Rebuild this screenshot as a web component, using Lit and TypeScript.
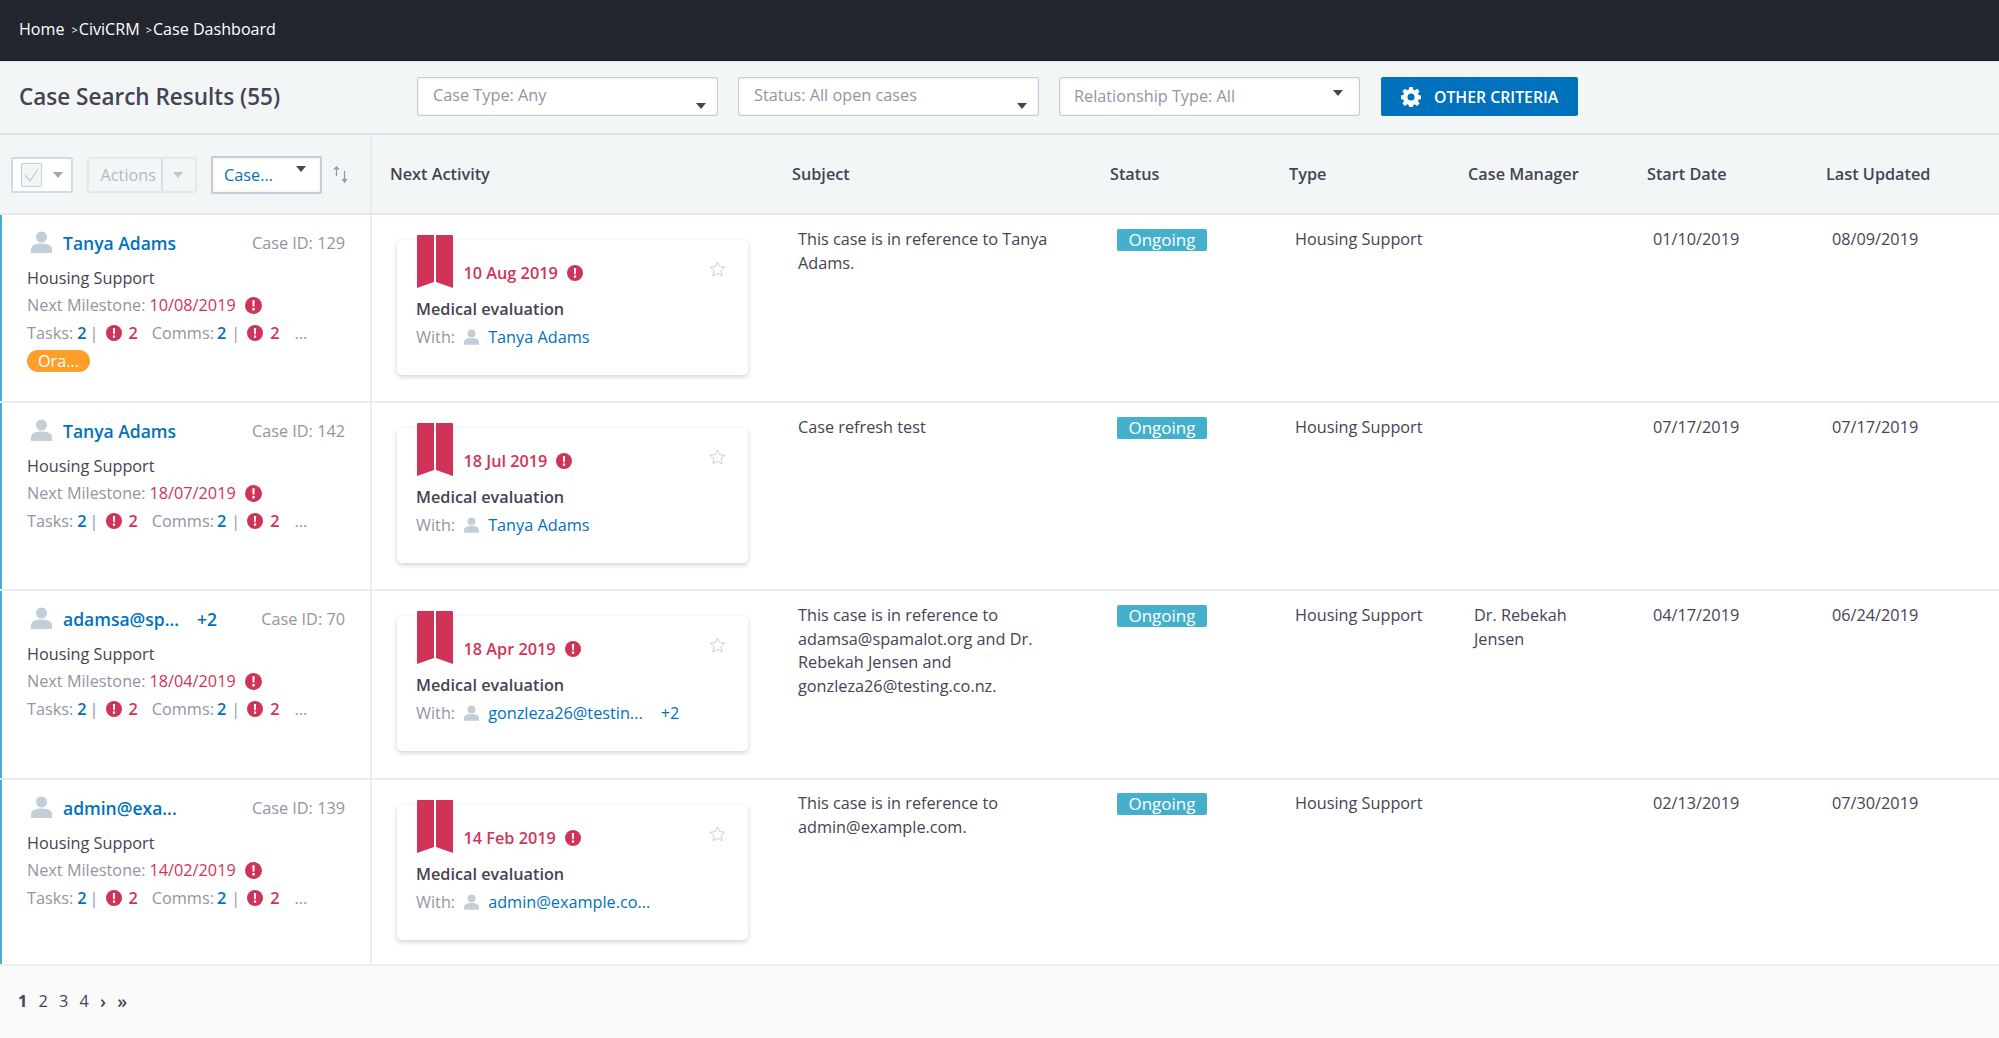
import { LitElement, html, css } from "lit";
import { customElement } from "lit/decorators.js";

const person = (cls: string) => html`<svg class=${cls} viewBox="0 0 21 22"><circle cx="10.5" cy="6" r="5.5"/><path d="M0 22v-3.5C0 14.500 4 12.500 10.500 12.500S21 14.500 21 18.500V22z"/></svg>`;
const alert = (cls = "alert") => html`<svg class=${cls} viewBox="0 0 16 16"><circle cx="8" cy="8" r="8" fill="#cf3458"/><path d="M6.900 3h2.200l-.3 6.200H7.200zM6.900 10.400h2.200v2.300H6.900z" fill="#fff"/></svg>`;
const caret = (cls = "caret") => html`<span class=${cls}></span>`;

interface Row {
  name: string; extra?: string; id: string; milestone: string; tag?: string;
  date: string; withName: string; withExtra?: string;
  subject: string[]; manager?: string[]; start: string; updated: string;
}
const rows: Row[] = [
  { name: "Tanya Adams", id: "129", milestone: "10/08/2019", tag: "Ora...", date: "10 Aug 2019", withName: "Tanya Adams",
    subject: ["This case is in reference to Tanya", "Adams."], start: "01/10/2019", updated: "08/09/2019" },
  { name: "Tanya Adams", id: "142", milestone: "18/07/2019", date: "18 Jul 2019", withName: "Tanya Adams",
    subject: ["Case refresh test"], start: "07/17/2019", updated: "07/17/2019" },
  { name: "adamsa@sp...", extra: "+2", id: "70", milestone: "18/04/2019", date: "18 Apr 2019", withName: "gonzleza26@testin...", withExtra: "+2",
    subject: ["This case is in reference to", "adamsa@spamalot.org and Dr.", "Rebekah Jensen and", "gonzleza26@testing.co.nz."], manager: ["Dr. Rebekah", "Jensen"], start: "04/17/2019", updated: "06/24/2019" },
  { name: "admin@exa...", id: "139", milestone: "14/02/2019", date: "14 Feb 2019", withName: "admin@example.co...",
    subject: ["This case is in reference to", "admin@example.com."], start: "02/13/2019", updated: "07/30/2019" },
];

@customElement("app-root")
export class AppRoot extends LitElement {
  static styles = css`
    :host { display: flex; flex-direction: column; width: 1999px; height: 1038px; overflow: hidden; background: #fff;
      font-family: "Open Sans", sans-serif; font-size: 16.25px; color: #464354; }
    a { color: #0071bd; text-decoration: none; }
    svg { display: block; flex: none; }

    .crumbs { flex: none; height: 61px; box-sizing: border-box; background: #22272f; color: #fff; display: flex; align-items: center;
      padding: 0 0 3px 19px; font-size: 16.1px; }
    .crumbs .sep { font-size: 11px; margin: 0 1px 0 6px; }
    .crumbs .first { margin-right: 1px; }

    .filters { flex: none; height: 74px; box-sizing: border-box; background: #f3f6f7; border-top: 1px solid #dfe6e9; border-bottom: 2px solid #dfe6e9;
      display: flex; align-items: center; padding: 0 0 2px 19px; }
    .filters h1 { margin: 0; width: 398px; font-size: 22.5px; font-weight: 600; line-height: 30px; white-space: nowrap; padding-top: 1px; }
    .select { position: relative; box-sizing: border-box; width: 301px; height: 39px; margin-right: 20px; background: #fff; border: 1px solid #c2cfd8; border-radius: 2px;
      box-shadow: inset 0 0 3px rgba(0,0,0,.12); color: #9494a4; padding: 0 15px; display: flex; align-items: center; }
    .select span.t { margin-bottom: 3px; }
    .select .caret { position: absolute; right: 11px; bottom: 6px; }
    .select.up { padding-left: 14px; }
    .select.up .caret { top: 12px; right: 16px; bottom: auto; }
    .select.up span.t { margin-bottom: 2px; }
    .caret { display: block; width: 0; height: 0; border-left: 5px solid transparent; border-right: 5px solid transparent; border-top: 6px solid #464354; }
    .btn { box-sizing: border-box; width: 197px; height: 39px; margin-left: 1px; background: #0071bd; color: #fff; border-radius: 2px; display: flex; align-items: center;
      padding-left: 20px; gap: 13px; font-weight: 600; }
    .btn svg { width: 20px; height: 20px; }
    .btn span { font-size: 15.8px; white-space: nowrap; }

    .head { flex: none; height: 80px; box-sizing: border-box; background: #f3f6f7; border-bottom: 2px solid #e3e9ec; display: grid;
      grid-template-columns: 372px 402px 318px 179px 179px 179px 179px 1fr; align-items: center; font-weight: 600; }
    .head > div { padding-left: 18px; }
    .head > .tools { padding: 2px 0 0 11px; height: 100%; box-sizing: border-box; border-right: 2px solid #e8eef0; display: flex; align-items: center; font-weight: 400; }
    .chk { box-sizing: border-box; width: 62px; height: 36px; border: 2px solid #cfdce3; border-radius: 2px; background: #fff; display: flex; align-items: center; padding-left: 8px; gap: 11px; }
    .chk .box { width: 21px; height: 24px; box-sizing: border-box; border: 1px solid #c2cfd8; border-radius: 2px; background: #f3f6f7; }
    .chk .box svg { width: 19px; height: 22px; }
    .caret.dim { border-top-color: #9ea6b0; }
    .actions { box-sizing: border-box; width: 110px; height: 36px; margin-left: 14px; border: 2px solid #e3e9ec; border-radius: 2px; display: flex; align-items: center; color: #b4b9c2; }
    .actions .l { width: 74px; text-align: right; padding-right: 5px; box-sizing: border-box; border-right: 2px solid #d5dfe5; height: 100%; line-height: 32px; }
    .actions .caret { margin-left: 10px; border-top-color: #c2c6cd; }
    .casesel { position: relative; box-sizing: border-box; width: 111px; height: 38px; margin-left: 14px; border: 2px solid #c2cfd8; border-radius: 2px; background: #fff;
      color: #0071bd; padding-left: 11px; line-height: 35px; box-shadow: inset 0 0 3px rgba(0,0,0,.1); }
    .casesel .caret { position: absolute; right: 14px; top: 8px; }
    .sort { width: 16px; height: 18px; margin-left: 11px; }

    .row { flex: none; height: 188px; box-sizing: border-box; border-bottom: 2px solid #e8eef0; display: grid;
      grid-template-columns: 372px 402px 318px 179px 179px 179px 179px 1fr; }
    .row.r2 { height: 189px; }
    .row.r3 { height: 186px; }
    .left { box-sizing: border-box; border-left: 2px solid #44b0cc; border-right: 2px solid #e8eef0; padding: 14px 25px 0 25px; }
    .left > div { height: 28px; display: flex; align-items: center; white-space: nowrap; }
    .left > .nameline { position: relative; margin-bottom: 7px; }
    .left > .svc { height: 27px; }
    .who { width: 21px; height: 22px; margin: -2px 11px 0 4px; fill: #c2cfd8; }
    .nameline a { font-weight: 600; font-size: 17.5px; }
    .nameline .plus { margin-left: 18px; }
    .nameline .cid { margin-left: auto; color: #9494a4; }
    .muted { color: #9494a4; }
    .red { color: #cf3458; }
    .blue { color: #0071bd; font-weight: 600; }
    .alert { width: 16px; height: 16px; }
    .ms .alert { margin-left: 9px; width: 17px; height: 17px; }
    .ms .red { margin-left: 4px; }
    .counts .blue { margin-left: 4px; }
    .counts .gap + .blue { margin-left: 3px; }
    .counts .bar { margin: 0 7px 0 3px; color: #9494a4; }
    .counts .gap + .blue + .bar { margin-left: 5px; }
    .counts .n { margin-left: 7px; font-weight: 600; }
    .counts .gap { margin-left: 14px; }
    .counts .dots { margin-left: 15px; }
    .left > .tagline { height: 22px; margin-top: 3px; }
    .tag { background: #ff9f2b; color: #fff; border-radius: 11px; height: 22px; width: 63px; display: flex; align-items: center; justify-content: center; }

    .activity { padding: 25px 0 0 25px; }
    .card { position: relative; box-sizing: border-box; width: 351px; height: 135px; background: #fff; border-radius: 5px;
      box-shadow: 0 2px 5px rgba(40,50,60,.22); padding: 0 0 0 19px; }
    .mark { position: absolute; left: 20px; top: -5px; width: 36px; height: 53px; }
    .date { display: flex; align-items: center; height: 28px; padding: 19px 0 0 47.500px; box-sizing: content-box; font-weight: 600; color: #cf3458; }
    .date .alert { margin-left: 9px; }
    .star { position: absolute; right: 21px; top: 20px; width: 19px; height: 18px; fill: none; stroke: #c2cfd8; stroke-width: 1.300; }
    .title { font-weight: 600; height: 28px; line-height: 28px; margin-top: 8px; }
    .with { display: flex; align-items: center; height: 28px; white-space: nowrap; }
    .withp { width: 15px; height: 16px; fill: #c2cfd8; margin: 0 9px 0 9px; }
    .with .plus { margin-left: 18px; }

    .cell { padding: 13px 8px 0 24px; line-height: 23.600px; }
    .r3 .cell { padding-top: 12px; }
    .cell div { white-space: nowrap; }
    .badge { display: inline-block; width: 90px; height: 22px; box-sizing: border-box; background: #44b0cc; color: #fff; border-radius: 2px; text-align: center; line-height: 22px; font-size: 17px; vertical-align: top; margin: 1px 0 0 1px; }

    .pager { flex: 1; background: #fafafa; display: flex; align-items: center; padding: 0 0 2px 18px; gap: 11.200px; }
    .pager b { font-weight: 700; }
    .pager .arr { font-weight: 600; font-size: 18px; }
  `;

  private row(r: Row, i: number) {
    return html`<div class="row ${i === 2 ? "r2" : i === 3 ? "r3" : ""}">
      <div class="left">
        <div class="nameline">${person("who")}<a>${r.name}</a>${r.extra ? html`<a class="plus">${r.extra}</a>` : ""}<span class="cid">Case ID: ${r.id}</span></div>
        <div class="svc">Housing Support</div>
        <div class="ms"><span class="muted">Next Milestone:</span><span class="red">${r.milestone}</span>${alert()}</div>
        <div class="counts"><span class="muted">Tasks:</span><span class="blue">2</span><span class="bar">|</span>${alert()}<span class="red n">2</span><span class="muted gap">Comms:</span><span class="blue">2</span><span class="bar">|</span>${alert()}<span class="red n">2</span><span class="muted dots">...</span></div>
        ${r.tag ? html`<div class="tagline"><span class="tag">${r.tag}</span></div>` : ""}
      </div>
      <div class="activity"><div class="card">
        <svg class="mark" viewBox="0 0 36 53"><path d="M1 0h16v47L0 53V1a1 1 0 0 1 1-1zM19 0h16a1 1 0 0 1 1 1v52l-17-6z" fill="#cf3458"/></svg>
        <div class="date">${r.date}${alert()}</div>
        <svg class="star" viewBox="0 0 24 24"><path d="M12 2.500l2.900 6.300 6.900.8-5.100 4.700 1.400 6.800-6.100-3.400-6.100 3.400 1.400-6.800-5.100-4.700 6.900-.8z"/></svg>
        <div class="title">Medical evaluation</div>
        <div class="with"><span class="muted">With:</span>${person("withp")}<a>${r.withName}</a>${r.withExtra ? html`<a class="plus">${r.withExtra}</a>` : ""}</div>
      </div></div>
      <div class="cell">${r.subject.map((s) => html`<div>${s}</div>`)}</div>
      <div class="cell"><span class="badge">Ongoing</span></div>
      <div class="cell">Housing Support</div>
      <div class="cell">${(r.manager ?? []).map((s) => html`<div>${s}</div>`)}</div>
      <div class="cell">${r.start}</div>
      <div class="cell">${r.updated}</div>
    </div>`;
  }

  render() {
    return html`
      <div class="crumbs"><span class="first">Home</span><span class="sep">&gt;</span><span>CiviCRM</span><span class="sep">&gt;</span><span>Case Dashboard</span></div>
      <div class="filters">
        <h1>Case Search Results (55)</h1>
        <div class="select"><span class="t">Case Type: Any</span>${caret()}</div>
        <div class="select"><span class="t">Status: All open cases</span>${caret()}</div>
        <div class="select up"><span class="t">Relationship Type: All</span>${caret()}</div>
        <div class="btn">
          <svg viewBox="0 0 20 20"><path fill="#fff" fill-rule="evenodd" d="M8.200 0h3.600l.5 2.700 1.500.6 2.300-1.600 2.500 2.500-1.600 2.300.6 1.500 2.700.5v3.600l-2.700.5-.6 1.500 1.600 2.300-2.500 2.500-2.300-1.600-1.500.6-.5 2.700H8.200l-.5-2.700-1.500-.6-2.300 1.600-2.500-2.500 1.600-2.300-.6-1.500-2.700-.5V8.500l2.700-.5.6-1.500-1.600-2.300 2.500-2.500 2.300 1.600 1.500-.6zM10 6.500a3.500 3.500 0 1 0 0 7 3.500 3.500 0 0 0 0-7z"/></svg>
          <span>OTHER CRITERIA</span>
        </div>
      </div>
      <div class="head">
        <div class="tools">
          <div class="chk"><div class="box"><svg viewBox="0 0 19 22"><path d="M3 11l5 6 8-12" fill="none" stroke="#c2cfd8" stroke-width="1.200"/></svg></div>${caret("caret dim")}</div>
          <div class="actions"><div class="l">Actions</div>${caret()}</div>
          <div class="casesel">Case...${caret()}</div>
          <svg class="sort" viewBox="0 0 16 18"><path d="M3.500 1v9M1 3.500L3.500 1 6 3.500" fill="none" stroke="#8d99a6" stroke-width="1.300"/><path d="M11.500 5v12" stroke="#8d99a6" stroke-width="1.300"/><path d="M8.500 13h6l-3 4z" fill="#8d99a6"/></svg>
        </div>
        <div>Next Activity</div><div>Subject</div><div>Status</div><div>Type</div><div>Case Manager</div><div>Start Date</div><div>Last Updated</div>
      </div>
      ${rows.map((r, i) => this.row(r, i))}
      <div class="pager"><b>1</b><span>2</span><span>3</span><span>4</span><span class="arr">›</span><span class="arr">»</span></div>`;
  }
}
